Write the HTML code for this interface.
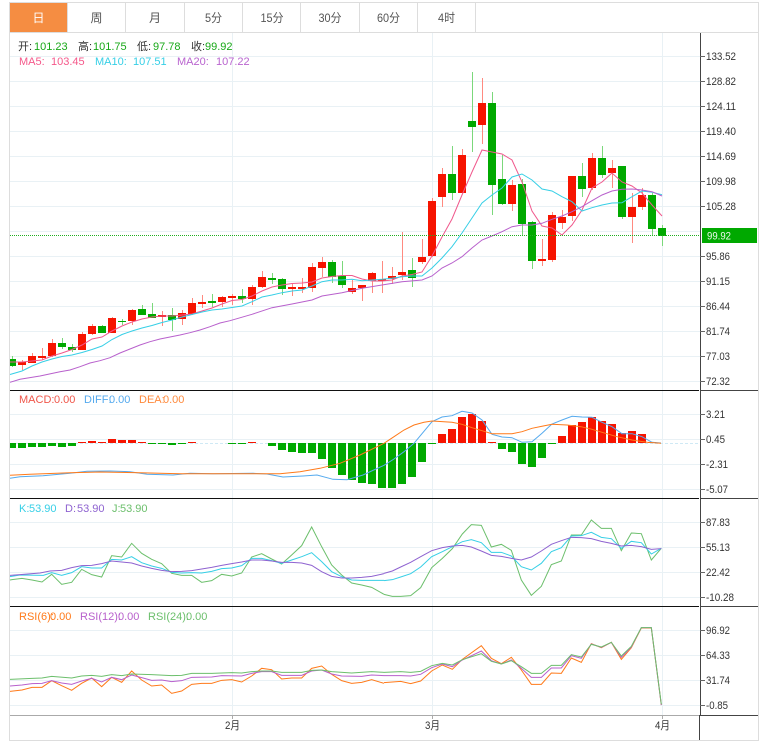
<!DOCTYPE html>
<html><head><meta charset="utf-8"><title>K</title>
<style>
html,body{margin:0;padding:0;background:#fff;width:768px;height:753px;overflow:hidden}
svg{display:block}
text{font-family:"Liberation Sans","Noto Sans CJK SC",sans-serif;font-size:11px}
.ax text{font-size:11px;fill:#333}
polyline{fill:none;vector-effect:non-scaling-stroke;stroke-width:1}
.c{shape-rendering:crispEdges}
</style></head><body>
<svg width="768" height="753" viewBox="0 0 768 753">
<!-- frame -->
<rect x="9.5" y="2.5" width="749" height="738" fill="#fff" stroke="#ddd"/>
<rect x="10" y="3" width="57" height="29" fill="#f58d42"/>
<path class="c" d="M10 32.5H758M67.5 3V32M125.5 3V32M184.5 3V32M242.5 3V32M300.5 3V32M359.5 3V32M417.5 3V32M475.5 3V32" stroke="#ddd" fill="none"/>
<g text-anchor="middle">
<text x="38.5" y="22" fill="#fff" style="font-size:12px">日</text>
<text x="96.5" y="22" fill="#555" style="font-size:12px">周</text>
<text x="155" y="22" fill="#555" style="font-size:12px">月</text>
<text x="213.5" y="22" fill="#555" style="font-size:12px" textLength="17" lengthAdjust="spacingAndGlyphs">5分</text>
<text x="272" y="22" fill="#555" style="font-size:12px" textLength="23" lengthAdjust="spacingAndGlyphs">15分</text>
<text x="330" y="22" fill="#555" style="font-size:12px" textLength="23" lengthAdjust="spacingAndGlyphs">30分</text>
<text x="388.5" y="22" fill="#555" style="font-size:12px" textLength="23" lengthAdjust="spacingAndGlyphs">60分</text>
<text x="446.5" y="22" fill="#555" style="font-size:12px" textLength="17" lengthAdjust="spacingAndGlyphs">4时</text>
</g>
<!-- grid -->
<path class="c" stroke="#e9f1f5" fill="none" d="M10 56.5H700M10 81.5H700M10 106.5H700M10 131.5H700M10 156.5H700M10 181.5H700M10 206.5H700M10 231.5H700M10 256.5H700M10 281.5H700M10 306.5H700M10 331.5H700M10 356.5H700M10 381.5H700M10 414.5H700M10 439.5H700M10 464.5H700M10 489.5H700M10 522.5H700M10 547.5H700M10 572.5H700M10 597.5H700M10 630.5H700M10 655.5H700M10 680.5H700M10 705.5H700M232.5 33V715M432.5 33V715M662.5 33V715"/>
<!-- wicks -->
<path class="c" fill="none" stroke="#ff8a80" d="M22.5 360V370M32.5 353V363M42.5 348V360M52.5 339V357M82.5 332V350M92.5 324V335M112.5 317V333M132.5 309V325M162.5 311V326M182.5 310V325M192.5 298V315M202.5 295V308M222.5 296V307M232.5 294V305M252.5 285V305M262.5 271V288M292.5 284V296M302.5 278V293M312.5 263V292M322.5 257V277M352.5 280V294M362.5 285V301M372.5 272V293M382.5 261V293M392.5 267V284M402.5 232V280M422.5 239V264M432.5 198V257M442.5 168V207M462.5 149V193M482.5 78V144M512.5 180V211M542.5 239V266M552.5 212V262M562.5 210V229M572.5 176V221M592.5 153V190M612.5 160V188M632.5 193V243M642.5 188V210"/>
<path class="c" fill="none" stroke="#7bd87b" d="M12.5 356V367M62.5 338V349M72.5 344V352M102.5 325V333M122.5 319V325M142.5 305V315M152.5 303V318M172.5 308V331M212.5 294V307M242.5 289V303M272.5 273V284M282.5 278V295M332.5 260V283M342.5 261V288M412.5 258V287M452.5 146V200M472.5 72V152M492.5 92V215M502.5 155V205M522.5 179V235M532.5 221V269M582.5 163V197M602.5 146V178M622.5 166V219M652.5 193V236M662.5 225V246"/>
<!-- bodies -->
<path class="c" fill="#f61400" d="M18 362h8V365h-8zM28 356h8V363h-8zM38 356h8V358h-8zM48 343h8V356h-8zM78 334h8V350h-8zM88 326h8V334h-8zM108 318h8V333h-8zM128 310h8V321h-8zM158 315h8V317h-8zM178 313h8V319h-8zM188 303h8V314h-8zM198 302h8V304h-8zM218 297h8V302h-8zM228 296h8V298h-8zM248 287h8V299h-8zM258 277h8V287h-8zM288 287h8V289h-8zM298 287h8V289h-8zM308 267h8V288h-8zM318 262h8V268h-8zM348 288h8V292h-8zM358 285h8V288h-8zM368 273h8V281h-8zM378 279h8V281h-8zM388 276h8V279h-8zM398 272h8V275h-8zM418 257h8V262h-8zM428 201h8V256h-8zM438 174h8V197h-8zM458 155h8V193h-8zM478 103h8V125h-8zM508 185h8V204h-8zM538 259h8V261h-8zM548 215h8V260h-8zM558 217h8V223h-8zM568 176h8V216h-8zM588 158h8V188h-8zM608 168h8V173h-8zM628 207h8V217h-8zM638 195h8V207h-8z"/>
<path class="c" fill="#00a900" d="M10 359h6V366h-6zM58 343h8V347h-8zM68 347h8V350h-8zM98 326h8V333h-8zM118 321h8V322h-8zM138 309h8V315h-8zM148 314h8V318h-8zM168 315h8V320h-8zM208 301h8V303h-8zM238 296h8V299h-8zM268 278h8V280h-8zM278 279h8V289h-8zM328 262h8V277h-8zM338 276h8V285h-8zM408 270h8V278h-8zM448 174h8V193h-8zM468 121h8V127h-8zM488 103h8V185h-8zM498 179h8V204h-8zM518 184h8V224h-8zM528 222h8V261h-8zM578 176h8V189h-8zM598 158h8V175h-8zM618 166h8V217h-8zM648 195h8V229h-8zM658 228h8V236h-8z"/>
<!-- MA lines -->
<polyline stroke="#f0588c" points="10,362 22,362 32,361 42,360 52,356 62,353 72,349.500 82,345 92,339 102,337 112,331 122,326 132,322 142,319 152,317 162,316 172,316 182,315 192,314 202,311 212,308 222,304 232,300.500 242,299.500 252,296 262,291 272,287 282,285 292,283.500 302,283 312,282 322,278 332,276.500 342,275.500 352,275.500 362,279 372,281 382,281 392,280 402,276 412,274.500 422,272 432,256 442,237 452,219 462,195 472,172 482,150 492,152 502,154 512,160 522,182 532,211 542,226 552,228 562,235 572,225 582,210 592,188 602,182 612,173 622,182 632,186 642,193 652,205 662,216"/>
<polyline stroke="#36cfe6" points="10,374.500 22,371 32,366 42,362 52,359 62,356.500 72,355 82,352.500 92,349.500 102,346 112,339.500 122,334.500 132,331 142,328 152,325.500 162,322.500 172,320 182,317 192,314.500 202,312 212,310 222,309 232,307.500 242,306 252,301.700 262,297 272,295 282,292.700 292,291 302,290 312,286 322,281.700 332,280 342,280 352,279.300 362,280.700 372,280 382,279.300 392,278.300 402,276.700 412,276 422,276 432,268 442,258 452,246.700 462,233 472,218 482,203 492,195 502,188 512,177 522,174 532,180 542,189 552,191 562,196.700 572,201.700 582,211 592,207.700 602,205 612,203 622,202.700 632,196.700 642,191 652,192.300 662,194.700"/>
<polyline stroke="#b860cc" points="10,382.300 20,379.300 40,376 60,371.700 70,370 80,366.700 90,363 100,360.700 110,357.700 120,353 130,349 140,345 150,341.700 160,339 170,337 180,335 190,332.700 200,330 210,326.700 220,323 230,320.700 252,314.300 272,307.700 292,304 312,300 322,296 342,292.700 362,288.300 382,285 402,281.700 422,280 432,276 442,268 452,263 462,256.700 472,248 482,240 492,236 502,231.700 512,226.700 522,225 532,225 542,223.300 552,219.300 562,216 572,211.700 582,206.700 592,200.700 602,195 612,191 622,189.300 632,189 642,190 652,191.700 662,196"/>
<path class="c" fill="none" stroke="#1fae1f" stroke-dasharray="1 1" d="M10 235.500H700"/>
<!-- MACD -->
<path fill="none" stroke="#cfe9f5" stroke-dasharray="3 2" d="M10 443.500H698"/>
<path class="c" fill="#f61400" d="M78 442h8V443h-8zM88 441h8V443h-8zM98 442h8V443h-8zM108 439h8V443h-8zM118 440h8V443h-8zM128 440h8V443h-8zM138 442h8V443h-8zM188 442h8V443h-8zM248 442h8V443h-8zM438 434h8V443h-8zM448 429h8V443h-8zM458 417h8V443h-8zM468 414h8V443h-8zM478 421h8V443h-8zM488 442h8V443h-8zM558 436h8V443h-8zM568 425h8V443h-8zM578 422h8V443h-8zM588 417h8V443h-8zM598 421h8V443h-8zM608 424h8V443h-8zM618 433h8V443h-8zM628 431h8V443h-8zM638 434h8V443h-8zM648 442h8V443h-8z"/>
<path class="c" fill="#00a900" d="M10 443h6V448h-6zM18 443h8V448h-8zM28 443h8V447h-8zM38 443h8V447h-8zM48 443h8V446h-8zM58 443h8V447h-8zM68 443h8V446h-8zM148 443h8V444h-8zM158 443h8V444h-8zM168 443h8V445h-8zM178 443h8V444h-8zM228 443h8V444h-8zM238 443h8V444h-8zM268 443h8V446h-8zM278 443h8V450h-8zM288 443h8V452h-8zM298 443h8V453h-8zM308 443h8V453h-8zM318 443h8V459h-8zM328 443h8V468h-8zM338 443h8V475h-8zM348 443h8V480h-8zM358 443h8V483h-8zM368 443h8V484h-8zM378 443h8V488h-8zM388 443h8V488h-8zM398 443h8V484h-8zM408 443h8V477h-8zM418 443h8V462h-8zM428 443h8V444h-8zM498 443h8V449h-8zM508 443h8V452h-8zM518 443h8V464h-8zM528 443h8V467h-8zM538 443h8V458h-8zM548 443h8V444h-8z"/>
<polyline stroke="#55aaee" points="10,478.300 20,476.700 43,475.700 70,473.300 87,471.300 110,471 130,471.700 147,474.300 173,475 190,473.300 213,473.700 253,473.300 267,474 283,477 303,476 317,475 333,479.300 347,479.700 363,475 384,465.300 394,459 404,451.700 414,443.300 432,421.700 442,417 452,415.700 462,411.300 472,413 482,420 492,434.300 502,437 512,437.700 522,442.300 532,441.700 542,433.300 552,424 562,420 572,416.300 582,417 592,417.300 602,422.300 612,426.700 622,433.700 632,433.700 642,436.700 652,442.300 661,443"/>
<polyline stroke="#ff7a1a" points="10,475.300 30,474.300 70,472.700 100,472 140,472.700 180,473.700 280,473.700 300,471.700 320,468.300 340,463.300 360,455 384,443.300 394,436.700 404,430 414,425 424,422.300 432,421 452,422.300 462,424.300 472,427.700 482,430.700 492,433.700 512,433.700 522,431.700 532,428.300 542,426.300 552,424.300 567,425 581,426.700 592,429.300 602,432.300 617,436.700 632,440 647,442.300 661,443.300"/>
<!-- KDJ -->
<g transform="translate(0,495) scale(.33333)">
<polyline stroke="#6cbf6c" points="30,255 36,254 66,250 96,255 126,261 155,238 185,268 215,262 245,223 275,239 305,246 335,182 365,186 395,145 425,175 455,193 485,206 515,235 545,241 575,241 605,262 635,257 665,238 695,243 725,234 755,186 785,176 815,192 845,207 875,180 905,152 935,96 965,155 995,210 1025,240 1055,264 1085,270 1115,277 1152,298"/>
<polyline stroke="#36cfe6" points="30,245 60,240 130,241 155,233 185,241 215,233 245,215 275,219 305,219 335,193 365,195 395,185 425,203 455,213 485,220 515,232 545,234 575,233 605,234 635,229 665,221 695,219 725,212 755,190 785,190 815,197 845,205 875,195 905,185 935,173 965,200 995,230 1025,245 1055,255 1085,256 1115,256 1152,256"/>
<polyline stroke="#8e62d0" points="30,241 60,239 120,234 150,228 185,226 215,218 245,212 275,211 305,206 335,198 365,201 395,204 425,213 455,220 485,226 515,230 545,229 575,227 605,222 635,217 665,211 695,206 725,201 755,195 785,195 815,198 845,202 875,202 905,204 935,211 965,230 995,244 1025,249 1055,249 1085,247 1115,244 1152,236"/>
</g>
<g transform="translate(384,495) scale(.33333)">
<polyline stroke="#6cbf6c" points="0,298 25,304 50,304 80,302 110,278 143,218 175,190 205,161 235,117 262,89 292,91 322,156 352,148 382,166 412,255 442,301 472,274 502,209 532,198 562,120 592,120 622,75 652,100 682,100 712,167 742,114 772,116 802,195 832,160"/>
<polyline stroke="#36cfe6" points="0,257 25,254 50,246 80,236 110,216 143,185 175,170 205,155 235,140 262,134 292,143 322,172 352,172 382,183 412,215 442,225 472,205 502,170 532,158 562,123 592,122 622,112 652,127 682,131 712,160 742,139 772,143 802,177 832,160"/>
<polyline stroke="#8e62d0" points="0,235 25,228 50,216 80,202 110,185 143,167 175,158 205,153 235,151 262,156 292,168 322,181 352,184 382,190 412,195 442,186 472,168 502,148 532,137 562,127 592,128 622,131 652,139 682,145 712,153 742,151 772,155 802,163 832,161"/>
</g>
<!-- RSI -->
<g transform="translate(0,605) scale(.33333)">
<polyline stroke="#ff7a1a" points="30,259 66,255 96,247 126,247 155,227 185,242 215,256 245,235 275,219 305,245 335,217 365,232 395,198 425,225 455,243 485,240 515,265 545,258 575,238 605,235 635,235 665,226 695,224 725,231 755,213 785,190 815,194 845,222 875,219 905,219 935,190 965,183 995,208 1025,227 1055,235 1085,232 1115,224 1152,235"/>
<polyline stroke="#b860cc" points="30,243 66,240 96,236 126,235 155,227 185,234 215,238 245,228 275,220 305,231 335,217 365,224 395,210 425,218 455,226 485,225 515,230 545,227 575,217 635,216 665,212 725,213 755,205 785,200 815,200 845,211 905,211 935,198 965,195 995,207 1025,213 1085,214 1115,210 1152,212"/>
<polyline stroke="#6cbf6c" points="30,223 96,220 126,219 155,214 215,219 245,213 275,211 305,214 335,209 365,212 395,207 455,209 515,212 545,211 575,205 635,205 695,203 725,204 755,200 785,198 815,198 845,202 905,202 935,196 965,195 995,200 1055,204 1115,200 1152,202"/>
</g>
<g transform="translate(384,605) scale(.33333)">
<polyline stroke="#ff7a1a" points="0,233 50,229 80,236 110,228 143,198 175,180 205,193 235,163 292,122 322,160 352,176 382,157 412,195 442,238 472,238 502,204 532,205 562,159 592,172 622,116 652,128 682,112 712,163 742,128 772,69 802,69 832,300"/>
<polyline stroke="#b860cc" points="0,212 50,212 80,213 110,208 143,188 175,177 205,185 235,165 292,138 322,167 352,177 382,165 412,190 442,217 472,217 502,189 532,189 562,152 592,160 622,117 652,127 682,112 712,157 742,126 772,68 802,68 832,300"/>
<polyline stroke="#6cbf6c" points="0,202 50,200 80,202 110,199 143,182 175,175 205,180 235,164 292,146 322,169 352,177 382,167 412,185 442,205 472,205 502,181 532,181 562,149 592,156 622,118 652,126 682,112 712,153 742,124 772,68 802,68 832,298"/>
</g>
<!-- axes -->
<path class="c" fill="none" stroke="#111" d="M10 390.500H699M10 498.500H699M10 606.500H699"/>
<path class="c" fill="none" stroke="#aaa" d="M10 715.500H699M232.500 715V719M432.500 715V719M662.500 715V719"/>
<path class="c" fill="none" stroke="#444" d="M700.500 33V715M699.500 715V740M700 390.500H758M700 498.500H758M700 606.500H758M700 715.500H758"/>
<path class="c" fill="none" stroke="#666" d="M700 56.500h5M700 81.500h5M700 106.500h5M700 131.500h5M700 156.500h5M700 181.500h5M700 206.500h5M700 256.500h5M700 281.500h5M700 306.500h5M700 331.500h5M700 356.500h5M700 381.500h5M700 414.500h5M700 439.500h5M700 464.500h5M700 489.500h5M700 522.500h5M700 547.500h5M700 572.500h5M700 597.500h5M700 630.500h5M700 655.500h5M700 680.500h5M700 705.500h5"/>
<g class="ax">
<text x="706" y="60" textLength="30" lengthAdjust="spacingAndGlyphs">133.52</text>
<text x="706" y="85" textLength="30" lengthAdjust="spacingAndGlyphs">128.82</text>
<text x="706" y="110" textLength="30" lengthAdjust="spacingAndGlyphs">124.11</text>
<text x="706" y="135" textLength="30" lengthAdjust="spacingAndGlyphs">119.40</text>
<text x="706" y="160" textLength="30" lengthAdjust="spacingAndGlyphs">114.69</text>
<text x="706" y="185" textLength="30" lengthAdjust="spacingAndGlyphs">109.98</text>
<text x="706" y="210" textLength="30" lengthAdjust="spacingAndGlyphs">105.28</text>
<text x="706" y="260" textLength="24" lengthAdjust="spacingAndGlyphs">95.86</text>
<text x="706" y="285" textLength="24" lengthAdjust="spacingAndGlyphs">91.15</text>
<text x="706" y="310" textLength="24" lengthAdjust="spacingAndGlyphs">86.44</text>
<text x="706" y="335" textLength="24" lengthAdjust="spacingAndGlyphs">81.74</text>
<text x="706" y="360" textLength="24" lengthAdjust="spacingAndGlyphs">77.03</text>
<text x="706" y="385" textLength="24" lengthAdjust="spacingAndGlyphs">72.32</text>
<text x="706" y="418" textLength="19" lengthAdjust="spacingAndGlyphs">3.21</text>
<text x="706" y="443" textLength="19" lengthAdjust="spacingAndGlyphs">0.45</text>
<text x="706" y="468" textLength="22" lengthAdjust="spacingAndGlyphs">-2.31</text>
<text x="706" y="493" textLength="22" lengthAdjust="spacingAndGlyphs">-5.07</text>
<text x="706" y="526" textLength="24" lengthAdjust="spacingAndGlyphs">87.83</text>
<text x="706" y="551" textLength="24" lengthAdjust="spacingAndGlyphs">55.13</text>
<text x="706" y="576" textLength="24" lengthAdjust="spacingAndGlyphs">22.42</text>
<text x="706" y="601" textLength="28" lengthAdjust="spacingAndGlyphs">-10.28</text>
<text x="706" y="634" textLength="24" lengthAdjust="spacingAndGlyphs">96.92</text>
<text x="706" y="659" textLength="24" lengthAdjust="spacingAndGlyphs">64.33</text>
<text x="706" y="684" textLength="24" lengthAdjust="spacingAndGlyphs">31.74</text>
<text x="706" y="709" textLength="22" lengthAdjust="spacingAndGlyphs">-0.85</text>
<text x="225" y="729" textLength="15" lengthAdjust="spacingAndGlyphs">2月</text>
<text x="425" y="729" textLength="15" lengthAdjust="spacingAndGlyphs">3月</text>
<text x="655" y="729" textLength="15" lengthAdjust="spacingAndGlyphs">4月</text>
</g>
<rect x="702" y="228" width="55" height="15" fill="#00a900"/>
<text x="707" y="239.500" fill="#eaf7ea" textLength="24" lengthAdjust="spacingAndGlyphs">99.92</text>
<!-- legends -->
<text x="18" y="50" fill="#333">开:</text><text x="34" y="50" fill="#18a818">101.23</text>
<text x="78" y="50" fill="#333">高:</text><text x="93" y="50" fill="#18a818">101.75</text>
<text x="137" y="50" fill="#333">低:</text><text x="153" y="50" fill="#18a818">97.78</text>
<text x="191" y="50" fill="#333">收:</text><text x="205" y="50" fill="#18a818">99.92</text>
<text x="19" y="65" fill="#f5588a">MA5:</text><text x="51" y="65" fill="#f5588a">103.45</text>
<text x="95" y="65" fill="#36cfe6">MA10:</text><text x="133" y="65" fill="#36cfe6">107.51</text>
<text x="177" y="65" fill="#b964cf">MA20:</text><text x="216" y="65" fill="#b964cf">107.22</text>
<text x="19" y="403" fill="#f0564a">MACD:</text><text x="54" y="403" fill="#f0564a">0.00</text>
<text x="84" y="403" fill="#55aaee">DIFF:</text><text x="109" y="403" fill="#55aaee">0.00</text>
<text x="139" y="403" fill="#ff8a3c">DEA:</text><text x="163" y="403" fill="#ff8a3c">0.00</text>
<text x="19" y="512" fill="#36cfe6">K:</text><text x="29" y="512" fill="#36cfe6">53.90</text>
<text x="65" y="512" fill="#8e62d0">D:</text><text x="77" y="512" fill="#8e62d0">53.90</text>
<text x="112" y="512" fill="#6cbf6c">J:</text><text x="120" y="512" fill="#6cbf6c">53.90</text>
<text x="19" y="620" fill="#ff7a1a">RSI(6):</text><text x="50" y="620" fill="#ff7a1a">0.00</text>
<text x="80" y="620" fill="#b860cc">RSI(12):</text><text x="118" y="620" fill="#b860cc">0.00</text>
<text x="148" y="620" fill="#6cbf6c">RSI(24):</text><text x="186" y="620" fill="#6cbf6c">0.00</text>
</svg>
</body></html>
